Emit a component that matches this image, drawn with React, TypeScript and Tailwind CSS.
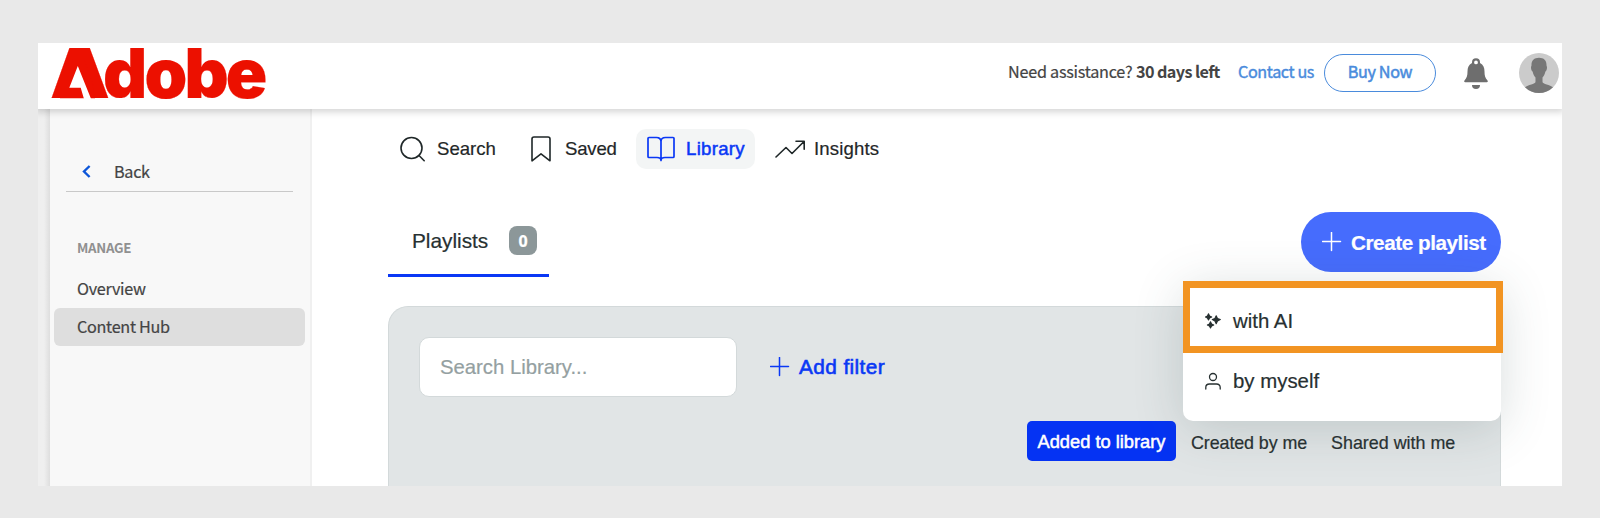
import type { ReactNode } from "react";

const sans = "font-['Noto_Sans_CJK_SC','Noto_Sans',sans-serif] [-webkit-text-stroke:0.2px]";

function Plus() {
  return (
    <svg width="20" height="20" viewBox="0 0 20 20" className="shrink-0" fill="none" stroke="currentColor" strokeWidth="1.500" strokeLinecap="round">
      <path d="M9.500 0.500v18M0.500 9.500h18" />
    </svg>
  );
}

function Bell() {
  return (
    <svg width="26" height="32" viewBox="0 0 26 32" className="shrink-0" fill="#6e6e6e">
      <path fillRule="evenodd" d="M13 1.300a4 4 0 0 0-4 4v.6C5.600 7.600 4.500 10.600 4.500 14.500c0 4-.6 6.500-3 9-.6.800-.3 1.700.7 1.700h21.600c1 0 1.300-.9.7-1.700-2.400-2.500-3-5-3-9 0-3.900-1.100-6.900-4.500-8.600v-.6a4 4 0 0 0-4-4Zm0 2.200a1.900 1.900 0 1 1 0 3.800 1.900 1.900 0 0 1 0-3.800Z" />
      <path d="M9 28h8a4 3.900 0 0 1-8 0Z" />
    </svg>
  );
}

function Avatar() {
  return (
    <svg width="40" height="40" viewBox="0 0 40 40" className="shrink-0">
      <circle cx="20" cy="20" r="20" fill="#cbcbcb" />
      <path fill="#777" d="M20 4.700c4.800 0 7.600 2.800 7.500 7.300 0 1 .5 1.400.5 2.600 0 1.900-.7 3.400-1.600 4-.6 2.800-1.800 4.900-2.900 6v4.100c0 2.600 7.700 3 10.500 5.500A20 20 0 0 1 20 40 20 20 0 0 1 6 34.200c2.800-2.500 10.500-2.900 10.500-5.500v-4.100c-1.100-1.100-2.300-3.200-2.900-6-.9-.6-1.600-2.100-1.600-4 0-1.200.5-1.600.5-2.600-.1-4.500 2.700-7.300 7.500-7.300Z" />
    </svg>
  );
}

function Logo() {
  return (
    <div className="relative ml-[12px] h-[66px] w-[220px] whitespace-nowrap font-['Inter',sans-serif] text-[68.500px] font-black leading-[62px] tracking-[-2.800px] text-[#ec1000]">
      <span className="inline-block w-[53px] origin-left scale-x-[1.100]">A</span>
      <span>dobe</span>
      <svg width="60" height="60" viewBox="0 0 60 60" className="absolute left-0 top-0">
        <path fill="#ec1000" d="M23 16h11l10 28H15Z" />
        <path fill="#ec1000" d="M12 40h30l3 15.300H10Z" />
        <path fill="#fff" d="m27.800 23-8.500 21.700h11.400L34.300 57h7.200Z" />
      </svg>
    </div>
  );
}

function NavText({ children, className }: { children: ReactNode; className: string }) {
  return <span className={`block whitespace-nowrap text-[18.600px] leading-6 ${className}`}>{children}</span>;
}

function Header() {
  return (
    <header className={`relative z-10 flex h-[66px] shrink-0 items-start bg-white shadow-[0_1px_7px_2px_rgba(0,0,0,0.17)] ${sans}`}>
      <Logo />
      <div className="ml-[738px] flex h-[60px] items-center whitespace-nowrap text-[16.200px] leading-6 text-[#444]">
        <span className="relative -top-[2px] w-[128px] tracking-[-0.250px]">Need assistance?</span>
        <span className="relative -top-[2px] w-[102px] font-bold tracking-[-0.600px] [-webkit-text-stroke:0px]">30 days left</span>
        <span className="relative -top-[2px] w-[86px] tracking-[-0.400px] text-[#4a8bdc] [-webkit-text-stroke:0.4px]">Contact us</span>
        <span className="flex h-[38px] w-[112px] items-center justify-center rounded-full border border-[#4a8bdc] pb-[4px] tracking-[-0.350px] text-[#4a8bdc] [-webkit-text-stroke:0.5px]">
          Buy Now
        </span>
        <span className="ml-[27px]">
          <Bell />
        </span>
        <span className="ml-[30px]">
          <Avatar />
        </span>
      </div>
    </header>
  );
}

function Sidebar() {
  return (
    <aside className={`flex w-[274px] shrink-0 ${sans}`}>
      <div className="w-3 bg-gradient-to-r from-[#efefef] from-50% to-[#dedede]" />
      <div className="flex w-[262px] flex-col border-r-2 border-[#f0f0f0] bg-[#f8f8f8] text-[16.200px] leading-6 tracking-[-0.300px] text-[#444]">
        <div className="ml-4 mt-[47px] flex h-9 w-[227px] items-start border-b border-[#c9c9c9] pl-[16px]">
          <svg width="9" height="13" viewBox="0 0 9 13" className="mt-[9px]" fill="none" stroke="#0d56d9" strokeWidth="2.400">
            <path d="M7.600 1 2 6.500 7.600 12" />
          </svg>
          <span className="ml-[23px] mt-[3px]">Back</span>
        </div>
        <span className="ml-[27px] mt-[44px] text-[13.300px] font-bold text-[#909090] [-webkit-text-stroke:0px]">MANAGE</span>
        <span className="ml-[27px] mt-[16px]">Overview</span>
        <span className="ml-1 mt-[8px] flex h-[38px] w-[251px] items-center rounded-md bg-[#dedede] pb-[2px] pl-[23px]">Content Hub</span>
      </div>
    </aside>
  );
}

function Nav() {
  return (
    <nav className="flex h-10 items-center text-[#1f2728]">
      <svg width="26" height="26" viewBox="0 0 26 26" className="ml-3 shrink-0" fill="none" stroke="currentColor" strokeWidth="1.600">
        <circle cx="11.500" cy="12" r="10.500" />
        <path d="m19 19.500 5.200 5.200" strokeLinecap="round" />
      </svg>
      <NavText className="ml-[11px] w-[94px]">Search</NavText>
      <svg width="20" height="26" viewBox="0 0 20 26" className="shrink-0" fill="none" stroke="currentColor" strokeWidth="1.600" strokeLinejoin="round">
        <path d="M1 24.800V3a2 2 0 0 1 2-2h14a2 2 0 0 1 2 2v21.800l-9-7Z" />
      </svg>
      <NavText className="ml-[14px] w-[71px] tracking-[-0.200px]">Saved</NavText>
      <div className="flex h-10 w-[119px] items-center rounded-[10px] bg-[#f3f5f5] pl-[11px] text-[#0a38f5]">
        <svg width="28" height="26" viewBox="0 0 28 26" className="shrink-0" fill="none" stroke="currentColor" strokeWidth="1.700" strokeLinejoin="round">
          <path d="M14 5.500C14 3 12 1.500 9.500 1.500H2a1 1 0 0 0-1 1v18a1 1 0 0 0 1 1h8c2.500 0 4 1 4 3 0-2 1.500-3 4-3h8a1 1 0 0 0 1-1v-18a1 1 0 0 0-1-1h-7.500C16 1.500 14 3 14 5.500v19" />
        </svg>
        <NavText className="ml-[11px] tracking-[0.300px] [-webkit-text-stroke:0.5px]">Library</NavText>
      </div>
      <svg width="30" height="18" viewBox="0 0 30 18" className="ml-[20px] shrink-0" fill="none" stroke="currentColor" strokeWidth="1.600" strokeLinecap="round" strokeLinejoin="round">
        <path d="M1 17 11 7.500l6 6L29 1.500M21 1.200h8.200v8" />
      </svg>
      <NavText className="ml-[9px] tracking-[0.150px]">Insights</NavText>
    </nav>
  );
}

function CreateMenu() {
  return (
    <div className="absolute right-0 top-[69px] z-10 h-[140px] w-[318px] rounded-[10px] bg-white text-[20.400px] leading-6 shadow-[0_8px_50px_rgba(60,85,85,0.2)]">
      <div className="flex h-[72px] w-[320px] items-center border-[7px] border-[#f29422] bg-white pl-[15px] pt-[7px]">
        <svg width="16" height="16" viewBox="0 0 16 16" fill="currentColor" stroke="currentColor" strokeWidth="1.100" strokeLinejoin="round">
          <path d="M3.500.800 4.600 2.900 6.700 3.900 4.600 4.900 3.500 7 2.400 4.900.5 3.900 2.400 2.900ZM11.200 2.700l1.300 2.700 2.800 1.200-2.800 1.300-1.300 2.800-1.300-2.800-2.600-1.300 2.600-1.200ZM5.500 8.800l1.100 2.100 2.100 1-2.100 1-1.100 2.100-1.100-2.100-2-1 2-1Z" />
        </svg>
        <span className="ml-3">with AI</span>
      </div>
      <div className="flex h-14 items-center pl-[22px]">
        <svg width="16" height="18" viewBox="0 0 16 18" fill="none" stroke="currentColor" strokeWidth="1.300" strokeLinecap="round">
          <circle cx="8" cy="5" r="3.500" />
          <path d="M.8 17v-1.500c0-2 1.200-3.500 3.700-3.500h7c2.500 0 3.700 1.500 3.700 3.500V17" />
        </svg>
        <span className="ml-3">by myself</span>
      </div>
    </div>
  );
}

function Main() {
  return (
    <main className="flex w-[1250px] flex-col pl-[76px] pr-[61px] pt-5 font-['Liberation_Sans',Arial,sans-serif] text-[#273031] [-webkit-text-stroke:0.2px]">
      <Nav />
      <div className="relative mt-[43px] flex h-[94px] shrink-0 items-start justify-between">
        <div className="flex h-[65px] w-[161px] items-center border-b-[3px] border-[#0a38f5] pb-[5px] pl-6">
          <span className="w-[97px] text-[20.800px] leading-6">Playlists</span>
          <span className="flex h-[29px] w-7 items-center justify-center rounded-lg bg-[#8c9799] font-['Open_Sans',sans-serif] text-base font-bold text-white">0</span>
        </div>
        <button className="flex h-[60px] w-[200px] items-center whitespace-nowrap rounded-full bg-[#466cfd] pl-[21px] text-[20.700px] font-bold leading-6 tracking-[-0.450px] text-white">
          <Plus />
          <span className="ml-[9px] pt-px">Create playlist</span>
        </button>
        <CreateMenu />
      </div>
      <section className="flex grow flex-col rounded-t-[20px] border border-b-0 border-[#d3d9da] bg-[#e1e5e6] pl-[30px] pt-[30px]">
        <div className="flex items-center text-[20.300px] leading-6">
          <div className="flex h-[60px] w-[318px] items-center rounded-[10px] border border-[#d3d9da] bg-white pb-px pl-[20px] text-[#94a0a1]">Search Library...</div>
          <div className="ml-[33px] flex items-center gap-[9px] text-[20.800px] text-[#0a38f5]">
            <Plus />
            <span className="pb-px tracking-[0.400px] [-webkit-text-stroke:0.6px]">Add filter</span>
          </div>
        </div>
        <div className="mt-6 flex h-10 items-center whitespace-nowrap text-[17.900px] leading-6">
          <span className="ml-[608px] flex h-10 w-[149px] items-center justify-center rounded-[5px] bg-[#0533f3] pt-[2px] text-[18.300px] text-white [-webkit-text-stroke:0.5px]">Added to library</span>
          <span className="ml-[15px] w-[140px] pt-[3px] tracking-[-0.100px]">Created by me</span>
          <span className="pt-[3px]">Shared with me</span>
        </div>
      </section>
    </main>
  );
}

export default function App() {
  return (
    <div className="h-[518px] w-[1600px] overflow-hidden bg-[#e9e9e9] pl-[38px] pt-[43px]">
      <div className="flex h-[443px] w-[1524px] flex-col overflow-hidden bg-white">
        <Header />
        <div className="flex grow">
          <Sidebar />
          <Main />
        </div>
      </div>
    </div>
  );
}
